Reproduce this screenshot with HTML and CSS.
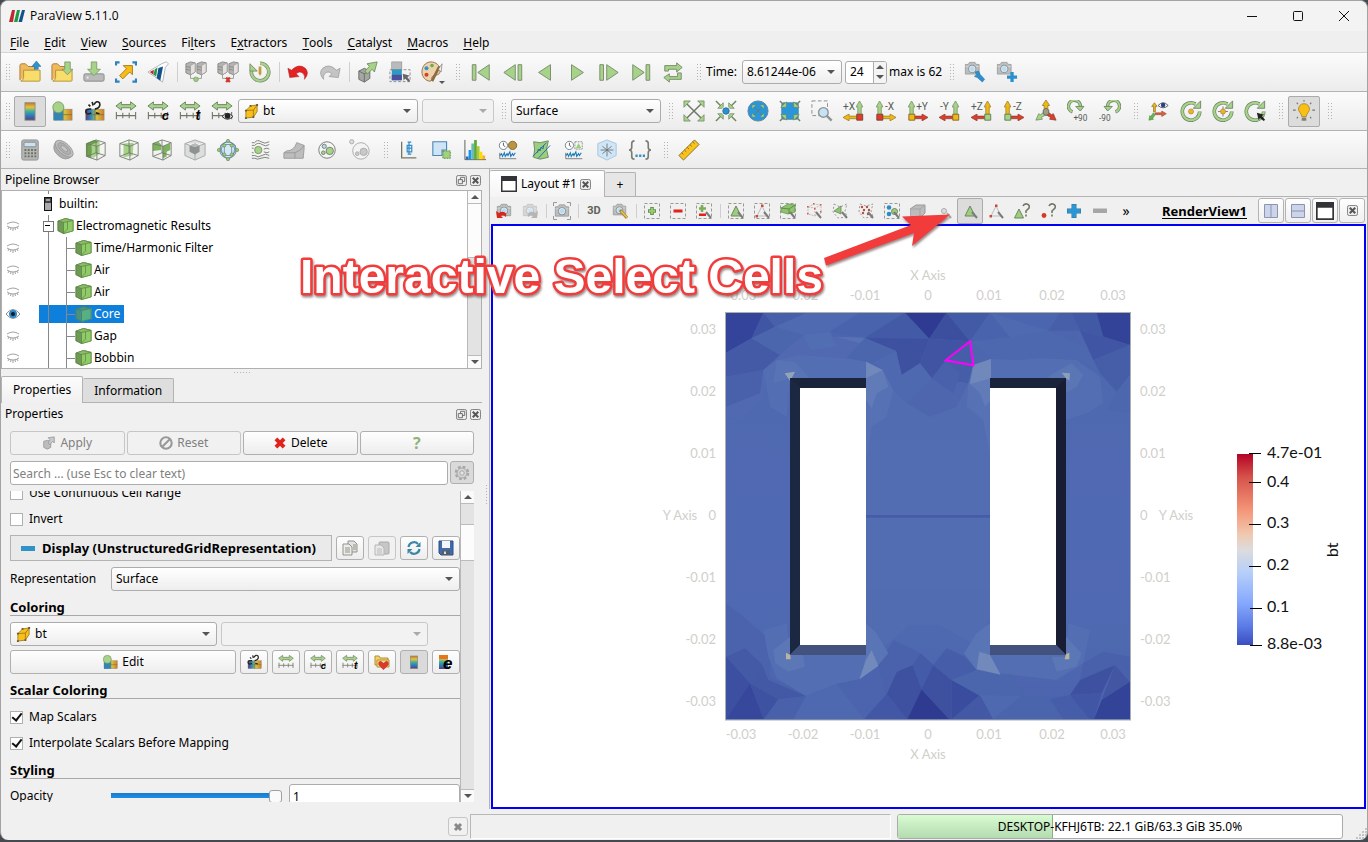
FILE: index.html
```html
<!DOCTYPE html>
<html lang="en">
<head>
<meta charset="utf-8">
<title>ParaView 5.11.0</title>
<link rel="stylesheet" href="styles.css">
</head>
<body>
<svg class="sprite" aria-hidden="true">
<defs>
<linearGradient id="rainbow" x1="0" y1="0" x2="0" y2="1"><stop offset="0" stop-color="#c4732c"/><stop offset=".25" stop-color="#e6c23c"/><stop offset=".5" stop-color="#3fae9a"/><stop offset=".72" stop-color="#2a7fc0"/><stop offset="1" stop-color="#5c3a7c"/></linearGradient>
<linearGradient id="rainbowh" x1="0" y1="0" x2="1" y2="0"><stop offset="0" stop-color="#5c3a7c"/><stop offset=".3" stop-color="#2a8fc0"/><stop offset=".6" stop-color="#d8c23c"/><stop offset="1" stop-color="#d07a2c"/></linearGradient>
<linearGradient id="cool" x1="0" y1="0" x2="0" y2="1"><stop offset="0" stop-color="#b40426"/><stop offset=".12" stop-color="#d6524a"/><stop offset=".3" stop-color="#f4987a"/><stop offset=".42" stop-color="#f0c8b0"/><stop offset=".5" stop-color="#dddcdc"/><stop offset=".62" stop-color="#b6cffa"/><stop offset=".78" stop-color="#86a8fc"/><stop offset=".9" stop-color="#5c7ce6"/><stop offset="1" stop-color="#3b4cc0"/></linearGradient>
<linearGradient id="core" x1="0" y1="0" x2="0" y2="1"><stop offset="0" stop-color="#4b64ad"/><stop offset=".2" stop-color="#4f69b0"/><stop offset=".5" stop-color="#5069b3"/><stop offset=".8" stop-color="#4f69b1"/><stop offset="1" stop-color="#4a62ac"/></linearGradient>
<clipPath id="steel"><path d="M726 313H1130V719H726Z"/></clipPath>

<symbol id="logo" viewBox="0 0 16 12"><path d="M3 0h3L4 12H0z" fill="#c1272d"/><path d="M8 0h3L8.500 12H5z" fill="#1f9a48"/><path d="M13 0h3l-3 12H9.500z" fill="#14508c"/></symbol>
<symbol id="folder" viewBox="0 0 24 24"><path d="M1 21V5q0-2 2-2h4l3 3h7v4" fill="#f0b95c" stroke="#a57d3a"/><path d="M5 10h18v11q0 1-1 1H2q3-1 3-4z" fill="#f8dc6c" stroke="#b09038"/></symbol>
<symbol id="open" viewBox="0 0 24 24"><use href="#folder"/><path d="M17 9V6h-3l5-6 5 6h-3v3z" fill="#2a93d5" stroke="#356c93" stroke-width=".6"/></symbol>
<symbol id="load" viewBox="0 0 24 24"><use href="#folder"/><path d="M15 1h6v8h3l-6 6-6-6h3z" fill="#a6d388" stroke="#6f8f5c" stroke-width=".8"/></symbol>
<symbol id="save" viewBox="0 0 24 24"><rect x="1" y="14" width="22" height="8" rx="1.500" fill="#b9bbbb" stroke="#868888"/><circle cx="5" cy="18" r="1.200" fill="#eee"/><path d="M9 1h6v8h4l-7 7-7-7h4z" fill="#a6d388" stroke="#6f8f5c" stroke-width=".8"/></symbol>
<symbol id="extract" viewBox="0 0 24 24"><path d="M1 5V1.500h4M19 1.500h4V5M23 19v3.500h-4M5 22.500H1V19" fill="none" stroke="#2a84bb" stroke-width="2.600"/><path d="M9 5h10v10l-3-3-7.500 7.500-3.500-3.500L12.500 8.500z" fill="#f8bd14" stroke="#a07a1e"/></symbol>
<symbol id="catalyst" viewBox="0 0 24 24"><path d="M1 12L16 3l5-2 2.500 2-3.500 4-3 16z" fill="#fff" stroke="#9aa2aa" stroke-width=".8"/><path d="M3 12l4.500-2.500L7 15z" fill="#c1272d"/><path d="M8.500 9l3-2-1.500 10-3-2z" fill="#1f9a48"/><path d="M12.500 7.500l5-1.500-3 15.500-4-3z" fill="#14508c"/></symbol>
<symbol id="servers" viewBox="0 0 24 24"><path d="M1 3l5-2 5 1v10l-5 3-5-2zM13 3l5-2 5 1v10l-5 3-5-2z" fill="#b3b3b1" stroke="#8a8b87"/><path d="M6 5v10l5-3V2zM18 5v10l5-3V2z" fill="#e6e0de" stroke="#8a8b87" stroke-width=".6"/><path d="M1 6l5 1M1 9l5 1M13 6l5 1M13 9l5 1" stroke="#888"/><path d="M6 15v4h12v-4" fill="none" stroke="#999"/></symbol>
<symbol id="connect" viewBox="0 0 24 24"><use href="#servers"/><circle cx="12" cy="20" r="2.600" fill="#9ccc7e" stroke="#6f8f5c" stroke-width=".6"/></symbol>
<symbol id="disconnect" viewBox="0 0 24 24"><use href="#servers"/><path d="M10 18l4 5M14 18l-4 5" stroke="#cf3528" stroke-width="2.400"/></symbol>
<symbol id="reset" viewBox="0 0 24 24"><path d="M4 7a9.500 9.500 0 1 0 8-4.500" fill="none" stroke="#7a8b70" stroke-width="4"/><path d="M4 7a9.500 9.500 0 1 0 8-4.500" fill="none" stroke="#a6d388" stroke-width="2.400"/><path d="M1 3v8h8z" fill="#a6d388" stroke="#7a8b70"/><path d="M10.500 6h3v8l-1.500 2-1.500-2z" fill="#c49a3a"/></symbol>
<symbol id="undo" viewBox="0 0 24 24"><path d="M1 8l2 10 10-1-3-3q4-4 8 0 2 3 1 6 6-7 1-12-7-6-15 2z" fill="#e32222" stroke="#b01b1b" stroke-width=".6"/></symbol>
<symbol id="redo" viewBox="0 0 24 24"><path d="M23 8l-2 10-10-1 3-3q-4-4-8 0-2 3-1 6-6-7-1-12 7-6 15 2z" fill="#c4c4c4" stroke="#979797" stroke-width=".8"/></symbol>
<symbol id="box" viewBox="0 0 24 24"><path d="M2 11l6-3 6 3v8l-6 4-6-3z" fill="#a5a7a3" stroke="#666b62"/><path d="M2 11l6 3 6-3M8 14v9" fill="none" stroke="#666b62"/></symbol>
<symbol id="autoapply" viewBox="0 0 24 24"><use href="#box"/><path d="M11 3l11-2-3 11-2.500-3-5 5-3-3 5-5z" fill="#a6d388" stroke="#6d8560" stroke-width=".9"/></symbol>
<symbol id="cropbar" viewBox="0 0 24 24"><rect x="3" y="1" width="11" height="9" fill="#b8babc" stroke="#888" stroke-width=".6"/><rect x="3" y="9" width="11" height="12" fill="#2a9cc4"/><rect x="3" y="15" width="11" height="6" fill="#4b4f9c"/><rect x="1" y="9.500" width="22" height="13" fill="none" stroke="#888" stroke-dasharray="3 2"/><path d="M15 14l8 2-3 1.500 3 4-1.500 1.500-4-4-1.500 2.500z" fill="#666"/></symbol>
<symbol id="palette" viewBox="0 0 24 24"><path d="M11 1C4 1 1 7 1 12s4 10 9 10c3 0 0-5 4-6s7-1 7-6S16 1 11 1z" fill="#eed2ac" stroke="#8f6c48"/><circle cx="12" cy="5" r="2" fill="#6fae4a"/><circle cx="6" cy="8" r="2.200" fill="#2f94cf"/><circle cx="6" cy="15" r="2.200" fill="#d44030"/><path d="M20 6l-8 16" stroke="#8b6b40" stroke-width="3"/><path d="M19 9l4-6-1 9z" fill="#f2efe6" stroke="#777" stroke-width=".7"/></symbol>
<symbol id="first" viewBox="0 0 24 24"><g fill="#a6d388" stroke="#76896b"><path d="M2.500 4h4v17h-4zM21 4v17L8.500 12.500z"/></g></symbol>
<symbol id="prev" viewBox="0 0 24 24"><g fill="#a6d388" stroke="#76896b"><path d="M17.500 4h4v17h-4zM14.500 4v17L2 12.500z"/></g></symbol>
<symbol id="back" viewBox="0 0 24 24"><path d="M18 4v17L5 12.500z" fill="#a6d388" stroke="#76896b"/></symbol>
<symbol id="play" viewBox="0 0 24 24"><path d="M6 4v17l13-8.500z" fill="#a6d388" stroke="#76896b"/></symbol>
<symbol id="next" viewBox="0 0 24 24"><g fill="#a6d388" stroke="#76896b"><path d="M2 4h4v17H2zM9.500 4v17L22 12.500z"/></g></symbol>
<symbol id="last" viewBox="0 0 24 24"><g fill="#a6d388" stroke="#76896b"><path d="M17.500 4h4v17h-4zM3 4v17l12.500-8.500z"/></g></symbol>
<symbol id="loop" viewBox="0 0 24 24"><path d="M3 11V5h13V2l6 5-6 5V9H7v2zM21 13v7H8v3l-6-5 6-4v3h9v-4z" fill="#a6d388" stroke="#76896b"/></symbol>
<symbol id="cam" viewBox="0 0 24 24"><path d="M2 5h4l2-3h8l2 3h4v14H2z" fill="#bcbebf" stroke="#8a8c8c"/><path d="M2 8h20" stroke="#d9d9d9"/><circle cx="12" cy="11.500" r="6" fill="#8e9294"/><circle cx="12" cy="11.500" r="4.200" fill="#b9dcf2" stroke="#eaf5fb"/></symbol>
<symbol id="camwrench" viewBox="0 0 24 24"><use href="#cam" x="0" y="0" width="18" height="18"/><path d="M12 12l4-1 1.500 3.500 5 5.500-2.500 3-5.500-5-3-1 1-1.500 2 .5z" fill="#2a90d0" stroke="#2d6f9c" stroke-width=".6"/></symbol>
<symbol id="camplus" viewBox="0 0 24 24"><use href="#cam" x="0" y="0" width="18" height="18"/><path d="M17.500 12v11M12 17.500h11" stroke="#2a90d0" stroke-width="3.600"/></symbol>
<symbol id="cbar" viewBox="0 0 24 24"><rect x="6.500" y="3" width="11" height="19" fill="url(#rainbow)" stroke="#8b8b80"/></symbol>
<symbol id="hbar" viewBox="0 0 24 24"><rect x="3" y="10" width="20" height="12" fill="url(#rainbowh)" stroke="#8b8b80" stroke-width=".6"/><path d="M13 10v12M3 16h20" stroke="#6b6b50" stroke-width=".8"/></symbol>
<symbol id="editmap" viewBox="0 0 24 24"><use href="#hbar"/><path d="M3 12h10v10H3z" fill="#3286b4"/><circle cx="8" cy="8" r="6" fill="#a6d388" stroke="#7b9a68"/></symbol>
<symbol id="separate" viewBox="0 0 24 24"><use href="#hbar"/><path d="M9 14q-5 3-6-1 0-4 6-3M12 5q3-5 6-2 2 5-5 7M6 5l2 2M10 2l1 4M14 14l4 1" fill="none" stroke="#222" stroke-width="1.800"/></symbol>
<symbol id="rescale" viewBox="0 0 24 24"><path d="M1 6.500L7 2v3h10V2l6 4.500-6 4.500V8.500H7V11z" fill="#a6d388" stroke="#6e7e64"/><path d="M1 17h22M1.500 13v8M8.500 14v6M15.500 14v6M22.500 13v8" fill="none" stroke="#757567" stroke-width="1.200"/></symbol>
<symbol id="rescalec" viewBox="0 0 24 24"><use href="#rescale"/><text x="16" y="22" font-size="14" font-family="Liberation Sans,sans-serif" font-style="italic" font-weight="700">c</text></symbol>
<symbol id="rescalet" viewBox="0 0 24 24"><use href="#rescale"/><text x="18" y="22" font-size="15" font-family="Liberation Sans,sans-serif" font-style="italic" font-weight="700">t</text></symbol>
<symbol id="rescalev" viewBox="0 0 24 24"><use href="#rescale"/><path d="M12 18q6-7 12 0-6 6-12 0z" fill="#ddd" stroke="#222"/><circle cx="18" cy="17.500" r="3" fill="#222"/></symbol>
<symbol id="cell" viewBox="0 0 16 16"><path d="M2 7l5-5 7-1v7l-4 6-8 1z" fill="#f9c01c" stroke="#8f6c14" stroke-width=".8"/><path d="M2 7l8-.5L14 1M10 6.500V14" fill="none" stroke="#8f6c14" stroke-width=".8"/><path d="M1 6h2v2H1zM13 0h2v2h-2zM9 13h2v2H9zM1 14h2v2H1zM6 1h2v2H6z" fill="#6c5a30"/></symbol>
<symbol id="out4" viewBox="0 0 24 24"><path d="M4 4l16 16M20 4L4 20" stroke="#6f7868" stroke-width="1.600"/><path d="M1 1h7L1 8zM23 1v7l-7-7zM1 23v-7l7 7zM23 23h-7l7-7z" fill="#a6d388" stroke="#6f8560" stroke-width=".8"/></symbol>
<symbol id="in4" viewBox="0 0 24 24"><path d="M1 1l22 22M23 1L1 23" stroke="#6f8560" stroke-width="1.600"/><path d="M9 9V3L3 9zM15 9h6l-6-6zM9 15H3l6 6zM15 15v6l6-6z" fill="#a6d388" stroke="#6f8560" stroke-width=".8"/></symbol>
<symbol id="zdata" viewBox="0 0 24 24"><use href="#in4"/><circle cx="12" cy="12" r="5" fill="#f5f5f5"/><circle cx="12" cy="12" r="3.500" fill="#2a90d0" stroke="#2d6f9c"/></symbol>
<symbol id="rclose" viewBox="0 0 24 24"><circle cx="12" cy="12" r="11" fill="#2896d8" stroke="#68808c"/><use href="#out4" x="5" y="5" width="14" height="14"/></symbol>
<symbol id="zclose" viewBox="0 0 24 24"><rect x="3" y="3" width="18" height="18" fill="#2896d8" stroke="#4f88a8" rx="2"/><path d="M1 1l6 6M23 1l-6 6M1 23l6-6M23 23l-6-6" stroke="#6f8560" stroke-width="1.600"/><path d="M8 8V2L2 8zM16 8h6l-6-6zM8 16H2l6 6zM16 16v6l6-6z" fill="#a6d388" stroke="#6f8560" stroke-width=".8"/></symbol>
<symbol id="lens" viewBox="0 0 24 24"><path d="M14 14l8 8" stroke="#8f9494" stroke-width="3.500"/><circle cx="10" cy="10" r="7" fill="#c6e2f5" stroke="#8f9696" stroke-width="2"/></symbol>
<symbol id="zbox" viewBox="0 0 24 24"><rect x="1" y="1" width="17" height="16" fill="none" stroke="#888" stroke-dasharray="4 2.500"/><use href="#lens" x="6" y="6" width="18" height="18"/></symbol>
<symbol id="up" viewBox="0 0 8 18"><path d="M4 0l4 7H6v11H2V7H0z"/></symbol>
<symbol id="side" viewBox="0 0 18 8"><path d="M18 4l-7 4V5.500H0v-3h11V0z"/></symbol>
<symbol id="sidel" viewBox="0 0 18 8"><path d="M0 4l7 4V5.500h11v-3H7V0z"/></symbol>
<symbol id="px" viewBox="0 0 24 24"><use href="#up" x="14" y="1" width="8" height="17" fill="#a6d388" stroke="#6f8560" stroke-width=".8"/><use href="#sidel" x="0" y="15" width="17" height="8" fill="#f0b814" stroke="#93752a" stroke-width=".8"/><path d="M15 15.500h6.500V22H15z" fill="#e23b2a" stroke="#7a4030"/><text x="0" y="11" font-size="11" fill="#565b56" font-family="Roboto,sans-serif">+X</text></symbol>
<symbol id="mx" viewBox="0 0 24 24"><use href="#up" x="1" y="1" width="8" height="17" fill="#a6d388" stroke="#6f8560" stroke-width=".8"/><use href="#side" x="6" y="15" width="17" height="8" fill="#f0b814" stroke="#93752a" stroke-width=".8"/><path d="M2 15.500h6.500V22H2z" fill="#e23b2a" stroke="#7a4030"/><text x="11" y="11" font-size="11" fill="#565b56" font-family="Roboto,sans-serif">-X</text></symbol>
<symbol id="py" viewBox="0 0 24 24"><use href="#up" x="1" y="1" width="8" height="17" fill="#a6d388" stroke="#6f8560" stroke-width=".8"/><use href="#side" x="6" y="15" width="17" height="8" fill="#dc3d2d" stroke="#8a4030" stroke-width=".8"/><path d="M2 15.500h6.500V22H2z" fill="#f0b814" stroke="#83652a"/><text x="10" y="11" font-size="11" fill="#565b56" font-family="Roboto,sans-serif">+Y</text></symbol>
<symbol id="my" viewBox="0 0 24 24"><use href="#up" x="14" y="1" width="8" height="17" fill="#a6d388" stroke="#6f8560" stroke-width=".8"/><use href="#sidel" x="0" y="15" width="17" height="8" fill="#dc3d2d" stroke="#8a4030" stroke-width=".8"/><path d="M15 15.500h6.500V22H15z" fill="#f0b814" stroke="#83652a"/><text x="1" y="11" font-size="11" fill="#565b56" font-family="Roboto,sans-serif">-Y</text></symbol>
<symbol id="pz" viewBox="0 0 24 24"><use href="#up" x="14" y="1" width="8" height="17" fill="#f0b814" stroke="#93752a" stroke-width=".8"/><use href="#sidel" x="0" y="15" width="17" height="8" fill="#dc3d2d" stroke="#8a4030" stroke-width=".8"/><path d="M15 15.500h6.500V22H15z" fill="#a6d388" stroke="#5f7a50"/><text x="0" y="11" font-size="11" fill="#565b56" font-family="Roboto,sans-serif">+Z</text></symbol>
<symbol id="mz" viewBox="0 0 24 24"><use href="#up" x="1" y="1" width="8" height="17" fill="#f0b814" stroke="#93752a" stroke-width=".8"/><use href="#side" x="6" y="15" width="17" height="8" fill="#dc3d2d" stroke="#8a4030" stroke-width=".8"/><path d="M2 15.500h6.500V22H2z" fill="#a6d388" stroke="#5f7a50"/><text x="11" y="11" font-size="11" fill="#565b56" font-family="Roboto,sans-serif">-Z</text></symbol>
<symbol id="iso" viewBox="0 0 24 24"><path d="M12 0l4 6h-2v7h-4V6H8z" fill="#f0b814" stroke="#93752a" stroke-width=".8"/><path d="M10 13l2 3-5 3 1 2-7 1 3-7 2 1z" fill="#a6d388" stroke="#6f8560" stroke-width=".8"/><path d="M14 13l-2 3 5 3-1 2 7 1-3-7-2 1z" fill="#dc3d2d" stroke="#8a4030" stroke-width=".8"/><path d="M9 11l3-2 3 2v4l-3 2-3-2z" fill="#9aa07a" stroke="#666"/></symbol>
<symbol id="rotp" viewBox="0 0 24 24"><path d="M6 13A6.500 6.500 0 1 1 14.500 8" fill="none" stroke="#70836a" stroke-width="3.800"/><path d="M6 13A6.500 6.500 0 1 1 14.500 8" fill="none" stroke="#a6d388" stroke-width="2"/><path d="M9.500 7h9l-4 5z" fill="#a6d388" stroke="#70836a"/><text x="7" y="23" font-size="9" fill="#565b56" font-family="Roboto,sans-serif">+90</text></symbol>
<symbol id="rotm" viewBox="0 0 24 24"><path d="M18 13A6.500 6.500 0 1 0 9.500 8" fill="none" stroke="#70836a" stroke-width="3.800"/><path d="M18 13A6.500 6.500 0 1 0 9.500 8" fill="none" stroke="#a6d388" stroke-width="2"/><path d="M14.500 7h-9l4 5z" fill="#a6d388" stroke="#70836a"/><text x="0" y="23" font-size="9" fill="#565b56" font-family="Roboto,sans-serif">-90</text></symbol>
<symbol id="axes" viewBox="0 0 24 24"><path d="M6 13V7H4l3-4 3 4H8v6z" fill="#f0b814" stroke="#93752a" stroke-width=".8"/><path d="M8 14h7v-2l5 3-5 3v-2H8z" fill="#e2603a" stroke="#8a4030" stroke-width=".6"/><path d="M6 14l2 2-3 4 1 1-5 1 1-5 1 1z" fill="#62b84a" stroke="#4f7a40" stroke-width=".6"/><path d="M11 6q5.500-6 11 0-5.500 5-11 0z" fill="#fff" stroke="#555"/><circle cx="16.500" cy="5.500" r="2.500" fill="#26408c"/></symbol>
<symbol id="ring" viewBox="0 0 24 24"><path d="M21.500 12.500A9.500 9.500 0 1 1 17 4.500" fill="none" stroke="#70836a" stroke-width="4"/><path d="M21.500 12.500A9.500 9.500 0 1 1 17 4.500" fill="none" stroke="#a6d388" stroke-width="2.400"/><path d="M22.500 1v8h-8z" fill="#a6d388" stroke="#70836a"/></symbol>
<symbol id="center1" viewBox="0 0 24 24"><use href="#ring"/><circle cx="12" cy="12.500" r="2.800" fill="#f0b02a" stroke="#a07a2a" stroke-width=".6"/></symbol>
<symbol id="center2" viewBox="0 0 24 24"><use href="#ring"/><path d="M12 7v11M6.500 12.500h11" stroke="#777"/><circle cx="12" cy="12.500" r="2.800" fill="#f0b02a" stroke="#a07a2a" stroke-width=".6"/></symbol>
<symbol id="center3" viewBox="0 0 24 24"><use href="#ring"/><path d="M14 14l8 2-2.500 1.500 3.500 4-1.500 1.500-4-3.500-1.500 2.500z" fill="#222"/></symbol>
<symbol id="bulb" viewBox="0 0 24 24"><path d="M12 4c-4 0-6 3-6 6s3 4 3.500 8h5c.5-4 3.500-5 3.500-8s-2-6-6-6z" fill="#f9bf14" stroke="#a07c22" stroke-width=".8"/><path d="M9.500 19h5v3.500h-5z" fill="#85816f"/><path d="M12 0v2M4 3l1.500 1.500M20 3l-1.500 1.500M0 11h3M21 11h3M4 20l1.500-1.500M20 20l-1.500-1.500" stroke="#777" stroke-width="1.200"/></symbol>
<symbol id="calc" viewBox="0 0 24 24"><rect x="3" y="1" width="18" height="22" rx="2" fill="#b4b5b5" stroke="#8d8f8f"/><rect x="5.500" y="3.500" width="13" height="5" rx="1" fill="#c8e2f6" stroke="#888"/><path d="M6 12h13M6 15.500h13M6 19h13" stroke="#6a705f" stroke-width="2" stroke-dasharray="2 1.600"/></symbol>
<symbol id="contour" viewBox="0 0 24 24"><g transform="rotate(42 12 12)" stroke="#969696" stroke-width=".8"><path d="M0 10q12-8 24 0-1 10-12 10T0 10z" fill="#adadad"/><ellipse cx="12" cy="10" rx="12" ry="6" fill="#bebebe"/><ellipse cx="12" cy="10" rx="8.500" ry="4" fill="#b0b0b0"/><ellipse cx="12" cy="10" rx="4.500" ry="2" fill="#c6c6c6"/></g></symbol>
<symbol id="wire" viewBox="0 0 24 24"><path d="M2 5l10-4 10 3v14l-9 5-11-4zM2 5l11 3 9-4M13 8v15M12 1v14M2 19l10-4 10 3" fill="none" stroke="#6e7468" stroke-width=".9"/></symbol>
<symbol id="clip" viewBox="0 0 24 24"><path d="M1 5l9-4 6 2-8 4-1 14-6-2z" fill="#6ba14b"/><path d="M7 6l9-3v13l-8 5z" fill="#a6d388"/><use href="#wire"/></symbol>
<symbol id="slice" viewBox="0 0 24 24"><path d="M6 5l11-1-1 14-10 2z" fill="#a6d388"/><use href="#wire"/></symbol>
<symbol id="thresh" viewBox="0 0 24 24"><path d="M2 5l6-2 3 3v6l-9 1zM13 8l8-3v7l-4 2v5l-4 2z" fill="#7db35c"/><use href="#wire"/></symbol>
<symbol id="subset" viewBox="0 0 24 24"><path d="M1 5l11-4 11 4v13l-11 5L1 18zM1 5l11 4 11-4M12 9v14" fill="#dcdddd" stroke="#a4a6a6"/><path d="M6 7l6-2 5 2v7l-5 3-6-3z" fill="#8f9292"/><path d="M6 7l6-2 5 2-5 2z" fill="#bbb"/></symbol>
<symbol id="glyph" viewBox="0 0 24 24"><circle cx="12" cy="12" r="9" fill="#d4e8f8" stroke="#647f96"/><path d="M12 2l8 5-2 10-6 5-6-5L4 7zM3 12l5-6h8l5 6-5 6H8zM8 6v12M16 6v12" fill="none" stroke="#5c7c91" stroke-width=".8"/><g fill="#9ccf7d" stroke="#5f8650" stroke-width=".7"><circle cx="12" cy="2" r="1.700"/><circle cx="2" cy="12" r="1.700"/><circle cx="22" cy="12" r="1.700"/><circle cx="12" cy="22" r="1.700"/><circle cx="8" cy="7" r="1.700"/><circle cx="16" cy="7" r="1.700"/><circle cx="8" cy="17" r="1.700"/><circle cx="16" cy="17" r="1.700"/></g></symbol>
<symbol id="stream" viewBox="0 0 24 24"><path d="M2 4h3q3-4 7-1t9 0M2 7h3q4-4 8-1t8 0M2 21h3q3 2 7 0t9 0M2 18h3q4 3 8 0t8 0M15 11q4-2 6 0M15 14q4 2 6 0M2 10h2M2 15h2" fill="none" stroke="#777d74"/><circle cx="9" cy="12" r="4" fill="#a6d388" stroke="#6f8560" stroke-width=".8"/></symbol>
<symbol id="warp" viewBox="0 0 24 24"><path d="M1 15l3-2q8 0 11-9l8 3v4l-1 10H1z" fill="#bdbdbd" stroke="#999"/><path d="M1 15h12q7-2 10-8M13 15v6" fill="none" stroke="#999"/></symbol>
<symbol id="group" viewBox="0 0 24 24"><circle cx="12" cy="12" r="9" fill="#f2f7f0" stroke="#777"/><circle cx="9" cy="8" r="2.300" fill="#b7d9f2" stroke="#777"/><circle cx="8" cy="15" r="2" fill="#a6d388" stroke="#777"/><circle cx="15" cy="13" r="4" fill="#a6d388" stroke="#777"/></symbol>
<symbol id="ungroup" viewBox="0 0 24 24"><circle cx="13" cy="13" r="9" fill="#f3f3f3" stroke="#aaa"/><circle cx="3" cy="3" r="2.300" fill="#ddd" stroke="#aaa"/><circle cx="9" cy="16" r="2" fill="#ccc" stroke="#aaa"/><circle cx="16" cy="14" r="4" fill="#c8c8c8" stroke="#aaa"/></symbol>
<symbol id="boxplot" viewBox="0 0 24 24"><path d="M4 3v17.500h16" fill="none" stroke="#747667" stroke-width="1.400"/><path d="M12 3v14M10 7h5v7h-5zM10 10h5M10.500 3.500h4M10.500 16.500h4" fill="none" stroke="#2f8cc8" stroke-width="1.300"/></symbol>
<symbol id="plotsel" viewBox="0 0 24 24"><path d="M2 3h15v9h-5v6H2z" fill="#cfe5f7" stroke="#4a87b5" stroke-width="1.200"/><rect x="13" y="13" width="8" height="8" fill="#9ed27c" stroke="#58803f" stroke-dasharray="2 1"/></symbol>
<symbol id="histo" viewBox="0 0 24 24"><path d="M1 1v21.500h23" fill="none" stroke="#555"/><path d="M2 19h3v3H2z" fill="#2b6cb4"/><path d="M5 12h3v10H5z" fill="#1594ff"/><path d="M8 5h3v17H8z" fill="#6fb9ae"/><path d="M11 1h3v21h-3z" fill="#5cab39"/><path d="M14 8h3v14h-3z" fill="#a9cb34"/><path d="M17 14h3v8h-3z" fill="#ffdb00"/><path d="M20 18h3v4h-3z" fill="#ffab28"/></symbol>
<symbol id="wave" viewBox="0 0 24 24"><path d="M3 15v6.500h18" fill="none" stroke="#777"/><path d="M3 18l2-2 1 3 2-4 1 4 2-3 1 2 2-4 1 5 2-3 1 2 2-3" fill="none" stroke="#1c7ab8" stroke-width="1.200"/></symbol>
<symbol id="plottime" viewBox="0 0 24 24"><use href="#wave"/><circle cx="7" cy="7" r="4.500" fill="#fff" stroke="#6d7f8c"/><path d="M7 4v3l2 1.500" fill="none" stroke="#555"/><circle cx="17" cy="7" r="4.500" fill="#bd9440" stroke="#7d683a"/></symbol>
<symbol id="plotline" viewBox="0 0 24 24"><path d="M4 3l7 1 9-2-2 9 2 9-9 2-7-2 1-9z" fill="#9ccf7d" stroke="#6f8560"/><path d="M3 19L18 4M9 21L22 7M8 15l1-4 2 2 1-4 2 2 1-4" fill="none" stroke="#1c6aa8"/></symbol>
<symbol id="plotsel2" viewBox="0 0 24 24"><use href="#wave"/><circle cx="7" cy="7" r="4.500" fill="#fff" stroke="#6d7f8c"/><path d="M7 4v3l2 1.500" fill="none" stroke="#555"/><rect x="13" y="3" width="8" height="8" fill="none" stroke="#888" stroke-dasharray="2 1"/><path d="M17 4l3 6h-6z" fill="#9ccf7d"/></symbol>
<symbol id="probe" viewBox="0 0 24 24"><path d="M12 1l10 4v13l-10 5-10-5V5z" fill="#d0e5f5" stroke="#a5c3da"/><path d="M12 5v14M5 12h14M7 8l10 8M17 8L7 16" stroke="#6f767b"/></symbol>
<symbol id="braces" viewBox="0 0 24 24"><path d="M6 2q-3 0-3 3v4q0 3-3 3 3 0 3 3v4q0 3 3 3M18 2q3 0 3 3v4q0 3 3 3-3 0-3 3v4q0 3-3 3" fill="none" stroke="#7c7c74" stroke-width="1.800"/><path d="M7 17h2.500v2.500H7zM11 17h2.500v2.500H11zM15 17h2.500v2.500H15z" fill="#3c8fc0"/></symbol>
<symbol id="ruler" viewBox="0 0 24 24"><path d="M18 1l5 5L6 23l-5-5z" fill="#fbc21a" stroke="#7f6b2f"/><path d="M4 15l2 2M7 12l2 2M10 9l2 2M13 6l2 2M16 3l2 2" stroke="#7f6b2f"/></symbol>
<symbol id="float" viewBox="0 0 12 12"><rect x=".5" y=".5" width="11" height="11" rx="2" fill="#eee" stroke="#777"/><path d="M5 5V2.500h4.500V7H7M2.500 5H7v4.500H2.500z" fill="none" stroke="#666"/></symbol>
<symbol id="close" viewBox="0 0 12 12"><rect x=".5" y=".5" width="11" height="11" rx="2" fill="#eee" stroke="#777"/><path d="M3 3l6 6M9 3L3 9" stroke="#555" stroke-width="2.200"/></symbol>
<symbol id="eyeoff" viewBox="0 0 14 10"><path d="M1 3q6-4 12 0M1 5q6 4 12 0M3 6L2 8M7 7v3M11 6l1 2M5 7l-.5 2M9 7l.5 2" fill="none" stroke="#a3a3a3"/></symbol>
<symbol id="eyeon" viewBox="0 0 14 10"><path d="M0 5q7-9 14 0-7 9-14 0z" fill="#fff" stroke="#8c8c8c"/><circle cx="7" cy="5" r="4" fill="#2a87c6"/><circle cx="7" cy="5" r="2" fill="#0a1b2c"/></symbol>
<symbol id="cube" viewBox="0 0 16 16"><path d="M0 3l8-3 8 2v11l-10 3-6-3z" fill="#6f9a55"/><path d="M0 3l8-3 8 2-10 2z" fill="#8bbd69"/><path d="M6 4l10-2v11L6 16z" fill="#8fcc67"/><path d="M.5 3L8 .5l7.500 2v10.500L6 15.500l-5.500-3zM.5 3L6 4.500l9.500-2M6 4.500v11M10 4v7l-4 4" fill="none" stroke="#5c8045" stroke-width=".7"/></symbol>
<symbol id="cubesel" viewBox="0 0 16 16"><path d="M0 3l8-3 8 2v11l-10 3-6-3z" fill="#4a9180"/><path d="M6 4l10-2v11L6 16z" fill="#58b082"/><path d="M.5 3L8 .5l7.500 2v10.500L6 15.500l-5.500-3zM.5 3L6 4.500l9.500-2M6 4.500v11" fill="none" stroke="#3c7b79" stroke-width=".7"/></symbol>
<symbol id="host" viewBox="0 0 8 14"><rect x=".5" y=".5" width="7" height="13" fill="#aaa" stroke="#111"/><path d="M1 1h6v5H1z" fill="#444"/><path d="M2 3h4" stroke="#fff"/></symbol>
<symbol id="win" viewBox="0 0 16 16"><path d="M0 0h16v16H0z" fill="#323437"/><path d="M1.500 5h13v9.500h-13z" fill="#fff"/></symbol>
<symbol id="dash" viewBox="0 0 16 16"><rect x=".5" y=".5" width="15" height="15" fill="none" stroke="#9a9a92" stroke-dasharray="3 2"/></symbol>
<symbol id="wand" viewBox="0 0 16 16"><path d="M10 9l5 6" stroke="#7b7b7b" stroke-width="2"/></symbol>
<symbol id="camundo" viewBox="0 0 16 16"><use href="#cam" width="16" height="16"/><path d="M0 8l1 7h6l-2-2q2-2 5 1 1-4-2-5-3-1-5 1z" fill="#d8261d"/></symbol>
<symbol id="camredo" viewBox="0 0 16 16"><use href="#cam" width="16" height="16" opacity=".5"/><path d="M16 8l-1 7H9l2-2q-2-2-5 1-1-4 2-5 3-1 5 1z" fill="#b5b5b5"/></symbol>
<symbol id="capture" viewBox="0 0 18 18"><path d="M.5 4V.5H4M14 .5h3.500V4M17.500 14v3.500H14M4 17.500H.5V14" fill="none" stroke="#999"/><use href="#cam" x="1" y="1" width="16" height="17"/></symbol>
<symbol id="camedit" viewBox="0 0 16 16"><use href="#cam" width="15" height="15"/><path d="M8 7l7 8" stroke="#a28332" stroke-width="3"/><path d="M9 8l6 6.500" stroke="#edc84a" stroke-width="1.400"/></symbol>
<symbol id="sadd" viewBox="0 0 16 16"><use href="#dash"/><path d="M8 4v8M4 8h8" stroke="#66904d" stroke-width="3.600"/><path d="M8 5v6M5 8h6" stroke="#94cc70" stroke-width="2"/></symbol>
<symbol id="ssub" viewBox="0 0 16 16"><use href="#dash"/><path d="M3.500 6.500h9v3h-9z" fill="#e2231a"/></symbol>
<symbol id="stog" viewBox="0 0 16 16"><use href="#dash"/><path d="M6 2v7M3 5.500h7" stroke="#7aae5b" stroke-width="2.600"/><path d="M3 10.500h7v2.500H3z" fill="#e2231a"/><use href="#wand"/></symbol>
<symbol id="tri" viewBox="0 0 16 16"><path d="M8 3l5 10H3z" fill="#9ccf7d" stroke="#6f8560"/></symbol>
<symbol id="scell" viewBox="0 0 16 16"><use href="#dash"/><use href="#tri"/><use href="#wand"/></symbol>
<symbol id="pts" viewBox="0 0 16 16"><path d="M8 3L3 13h10z" fill="none" stroke="#bbb"/><path d="M7 1.500h2.500V4H7zM1.500 12H4v2.500H1.500z" fill="#c84a36"/><use href="#wand"/></symbol>
<symbol id="spts" viewBox="0 0 16 16"><use href="#dash"/><use href="#pts"/></symbol>
<symbol id="sfrus" viewBox="0 0 16 16"><use href="#dash"/><path d="M1 5l7-4 7 1v7l-7 2-7-2z" fill="#8fc46e" stroke="#6a9452" stroke-width=".8"/><path d="M1 5l8 1 6-4M9 6v5" fill="none" stroke="#557f3e" stroke-width=".8"/><use href="#wand"/></symbol>
<symbol id="sfrp" viewBox="0 0 16 16"><path d="M2 4l6-3 7 1v8l-6 3-7-2zM2 4l7 1 6-3M9 5v8" fill="none" stroke="#c8b9b4" stroke-dasharray="2 1"/><g fill="#d85a4a"><path d="M1 3h1.500v1.500H1zM7 0h1.500v1.500H7zM14 1h1.500v1.500H14zM8 5h1.500v1.500H8zM1 10h1.500v1.500H1zM14 8h1.500v1.500H14z"/></g><use href="#wand"/></symbol>
<symbol id="spoly" viewBox="0 0 16 16"><path d="M2 1l6 3 7-3-2 7 2 6-9 1-5-6z" fill="none" stroke="#999" stroke-dasharray="2 2"/><path d="M9 3v8L2 8z" fill="#8cc46c" stroke="#6f8560" stroke-width=".8"/><use href="#wand"/></symbol>
<symbol id="spolyp" viewBox="0 0 16 16"><path d="M2 1l6 2 7-2-2 7 2 6-9 1-5-6z" fill="none" stroke="#999" stroke-dasharray="2 2"/><g fill="#b5503d"><circle cx="4" cy="4" r="1.200"/><circle cx="9" cy="4" r="1.200"/><circle cx="6" cy="7" r="1.200"/><circle cx="11" cy="7" r="1.200"/><circle cx="5" cy="10" r="1.200"/><circle cx="10" cy="11" r="1.200"/></g><use href="#wand"/></symbol>
<symbol id="sblock" viewBox="0 0 16 16"><use href="#dash"/><circle cx="5" cy="4.500" r="2.300" fill="#2a8cc8"/><circle cx="5" cy="11" r="2.300" fill="#2a8cc8"/><circle cx="10.500" cy="8.500" r="3" fill="#9ccf7d" stroke="#6f8560"/><use href="#wand"/></symbol>
<symbol id="gcube" viewBox="0 0 16 16"><path d="M0 6l6-4h9v8l-4 4H0z" fill="#bcbcbc" stroke="#999"/><path d="M0 6h10l5-4M10 6v8" fill="none" stroke="#a5a5a5"/></symbol>
<symbol id="gpt" viewBox="0 0 16 16"><circle cx="8" cy="8" r="2.500" fill="#ddd" stroke="#aaa"/><path d="M11 10l4 5" stroke="#aaa" stroke-width="2"/></symbol>
<symbol id="icell" viewBox="0 0 16 16"><use href="#tri"/><use href="#wand"/></symbol>
<symbol id="qcell" viewBox="0 0 16 16"><path d="M5 6l4.500 9H.5z" fill="#9ccf7d" stroke="#6f8560"/><path d="M9 3q1-2.500 4-2 3 1 2 4-2 2-3 3v2M12 11.500v2" fill="none" stroke="#6f7862" stroke-width="1.600"/></symbol>
<symbol id="qpt" viewBox="0 0 16 16"><circle cx="4" cy="12.500" r="2.400" fill="#d2392b"/><path d="M9 3q1-2.500 4-2 3 1 2 4-2 2-3 3v2M12 11.500v2" fill="none" stroke="#6f7862" stroke-width="1.600"/></symbol>
<symbol id="plus" viewBox="0 0 16 16"><path d="M8 1v14M1 8h14" stroke="#3a7090" stroke-width="5"/><path d="M8 1.500v13M1.500 8h13" stroke="#2a96d6" stroke-width="4"/></symbol>
<symbol id="minus" viewBox="0 0 16 16"><path d="M1 5.500h14v4.500H1z" fill="#a6a6a6"/></symbol>
<symbol id="splith" viewBox="0 0 16 16"><path d="M1.500 1.500h13v13h-13zM8 1.500v13" fill="#ccd4ec" stroke="#8d94ad"/></symbol>
<symbol id="splitv" viewBox="0 0 16 16"><path d="M1.500 1.500h13v13h-13zM1.500 8h13" fill="#ccd4ec" stroke="#8d94ad"/></symbol>
<symbol id="applyg" viewBox="0 0 16 16"><path d="M2 6l4-1 4 1v7l-4 2-4-2z" fill="#bdbdbd" stroke="#9c9c9c"/><path d="M7 2l7-1v7l-2-2-3 4-2-2 2-4z" fill="#c9c9c9" stroke="#9c9c9c"/></symbol>
<symbol id="forbid" viewBox="0 0 16 16"><circle cx="8" cy="8" r="6.500" fill="none" stroke="#999" stroke-width="2.400"/><path d="M4 12l8-8" stroke="#999" stroke-width="2.400"/></symbol>
<symbol id="redx" viewBox="0 0 12 12"><path d="M2.500 2.500l7 7M9.500 2.500l-7 7" stroke="#e0221b" stroke-width="3.400"/></symbol>
<symbol id="grayx" viewBox="0 0 12 12"><path d="M3 3l6 6M9 3L3 9" stroke="#888" stroke-width="3"/></symbol>
<symbol id="gear" viewBox="0 0 16 16"><circle cx="8" cy="8" r="6" fill="none" stroke="#a8a8a8" stroke-width="2.600" stroke-dasharray="2.700 2"/><circle cx="8" cy="8" r="5" fill="#d4d4d4" stroke="#a8a8a8"/><circle cx="8" cy="8" r="2.200" fill="#e5e5e5" stroke="#a8a8a8"/></symbol>
<symbol id="copy" viewBox="0 0 16 16"><path d="M6 1h6l3 3v8H6z" fill="#e2e2e2" stroke="#8f9389"/><path d="M1 4h6l3 3v8H1z" fill="#ececea" stroke="#8f9389"/><path d="M3 8h5M3 10h5M3 12h5M11 5h3M11 7h3M11 9h3" stroke="#8f9389"/></symbol>
<symbol id="paste" viewBox="0 0 16 16"><rect x="5" y="2" width="10" height="12" rx="1" fill="#c6c6c6" stroke="#aaa"/><path d="M1 5h6l3 3v7H1z" fill="#e8e8e8" stroke="#b5b5b5"/><path d="M3 9h5M3 11h5M3 13h5" stroke="#bbb"/></symbol>
<symbol id="refresh" viewBox="0 0 16 16"><path d="M2.500 7a5.500 5.500 0 0 1 9.500-3M13.500 9A5.500 5.500 0 0 1 4 12" fill="none" stroke="#3b87a8" stroke-width="2.200"/><path d="M14.500 2v5h-5zM1.500 14V9h5z" fill="#3b87a8"/></symbol>
<symbol id="floppy" viewBox="0 0 16 16"><path d="M1 1h14v14H3l-2-2z" fill="#3f6cab" stroke="#2f4f80"/><path d="M4 1h8v7H4z" fill="#f4f6fa"/><path d="M4 10.500h8V15H4z" fill="#555c66"/><path d="M6 11.500h2V14H6z" fill="#ddd"/></symbol>
<symbol id="fav" viewBox="0 0 16 16"><path d="M1 11V2h4l1 2h8v7z" fill="#f6d265" stroke="#b0903a"/><path d="M3 6h12v7H3z" fill="#fbe492" stroke="#b0903a"/><path d="M9.500 16l-5-5q-1-4 2.500-4l2.500 2L12 7q3.500 0 2.500 4z" fill="#d83b28"/></symbol>
<symbol id="cbe" viewBox="0 0 16 16"><path d="M1 1h9v14H1z" fill="url(#rainbow)"/><path d="M1 1h9v4H1z" fill="#e8741c"/><text x="5" y="15" font-size="17" font-family="Liberation Sans,sans-serif" font-style="italic" font-weight="700">e</text></symbol>
</defs>
</svg>

<div class="window">
<header class="titlebar">
  <svg class="applogo"><use href="#logo"/></svg><span class="apptitle">ParaView 5.11.0</span>
  <div class="winctl">
    <button aria-label="Minimize"><svg viewBox="0 0 12 12"><path d="M1 6.500h10" /></svg></button>
    <button aria-label="Maximize"><svg viewBox="0 0 12 12"><rect x="1.500" y="1.500" width="9" height="9" rx="1"/></svg></button>
    <button aria-label="Close"><svg viewBox="0 0 12 12"><path d="M1 1l10 10M11 1L1 11"/></svg></button>
  </div>
</header>
<nav class="menubar">
  <button><u>F</u>ile</button><button><u>E</u>dit</button><button><u>V</u>iew</button><button><u>S</u>ources</button><button>Fi<u>l</u>ters</button><button>E<u>x</u>tractors</button><button><u>T</u>ools</button><button><u>C</u>atalyst</button><button><u>M</u>acros</button><button><u>H</u>elp</button>
</nav>

<div class="toolbar">
  <i class="grip lead"></i>
  <button aria-label="Open"><svg><use href="#open"/></svg></button><button aria-label="Load state"><svg><use href="#load"/></svg></button><button aria-label="Save state"><svg><use href="#save"/></svg></button><button aria-label="Save extracts"><svg><use href="#extract"/></svg></button><button aria-label="Catalyst state"><svg><use href="#catalyst"/></svg></button>
  <i class="sep"></i>
  <button aria-label="Connect"><svg><use href="#connect"/></svg></button><button aria-label="Disconnect"><svg><use href="#disconnect"/></svg></button><button aria-label="Reset session"><svg><use href="#reset"/></svg></button>
  <i class="sep"></i>
  <button aria-label="Undo"><svg><use href="#undo"/></svg></button><button aria-label="Redo"><svg><use href="#redo"/></svg></button>
  <i class="sep"></i>
  <button aria-label="Auto apply"><svg><use href="#autoapply"/></svg></button><button aria-label="Find data"><svg><use href="#cropbar"/></svg></button><button class="drop" aria-label="Color palette"><svg><use href="#palette"/></svg></button>
  <i class="grip"></i>
  <button aria-label="First frame"><svg><use href="#first"/></svg></button><button aria-label="Previous frame"><svg><use href="#prev"/></svg></button><button aria-label="Reverse"><svg><use href="#back"/></svg></button><button aria-label="Play"><svg><use href="#play"/></svg></button><button aria-label="Next frame"><svg><use href="#next"/></svg></button><button aria-label="Last frame"><svg><use href="#last"/></svg></button><button aria-label="Loop"><svg><use href="#loop"/></svg></button>
  <i class="grip"></i>
  <label class="tlabel" for="time">Time:</label>
  <span class="combo w100"><select id="time"><option>8.61244e-06</option></select></span>
  <span class="spin"><input aria-label="Time step" value="24"><span class="steps"><button aria-label="Up" class="sup"></button><button aria-label="Down" class="sdn"></button></span></span>
  <span class="tmax">max is 62</span>
  <i class="grip"></i>
  <button aria-label="Adjust camera"><svg><use href="#camwrench"/></svg></button><button aria-label="Add camera link"><svg><use href="#camplus"/></svg></button>
</div>

<div class="toolbar">
  <i class="grip lead"></i>
  <button class="on" aria-label="Color legend"><svg><use href="#cbar"/></svg></button><button aria-label="Edit color map"><svg><use href="#editmap"/></svg></button><button aria-label="Separate color map"><svg><use href="#separate"/></svg></button><button aria-label="Rescale"><svg><use href="#rescale"/></svg></button><button aria-label="Rescale custom"><svg><use href="#rescalec"/></svg></button><button aria-label="Rescale temporal"><svg><use href="#rescalet"/></svg></button><button aria-label="Rescale visible"><svg><use href="#rescalev"/></svg></button>
  <span class="combo w180 has-icon"><svg><use href="#cell"/></svg><select aria-label="Color by"><option>bt</option></select></span>
  <span class="combo w72 off"><select aria-label="Component" disabled><option></option></select></span>
  <i class="grip"></i>
  <span class="combo w150"><select aria-label="Representation style"><option>Surface</option></select></span>
  <i class="grip"></i>
  <button aria-label="Reset camera"><svg><use href="#out4"/></svg></button><button aria-label="Zoom to data"><svg><use href="#zdata"/></svg></button><button aria-label="Reset camera closest"><svg><use href="#rclose"/></svg></button><button aria-label="Zoom closest"><svg><use href="#zclose"/></svg></button><button aria-label="Zoom to box"><svg><use href="#zbox"/></svg></button><button aria-label="+X"><svg><use href="#px"/></svg></button><button aria-label="-X"><svg><use href="#mx"/></svg></button><button aria-label="+Y"><svg><use href="#py"/></svg></button><button aria-label="-Y"><svg><use href="#my"/></svg></button><button aria-label="+Z"><svg><use href="#pz"/></svg></button><button aria-label="-Z"><svg><use href="#mz"/></svg></button><button aria-label="Isometric"><svg><use href="#iso"/></svg></button><button aria-label="Rotate +90"><svg><use href="#rotp"/></svg></button><button aria-label="Rotate -90"><svg><use href="#rotm"/></svg></button>
  <i class="grip"></i>
  <button aria-label="Orientation axes"><svg><use href="#axes"/></svg></button><button aria-label="Show center"><svg><use href="#center1"/></svg></button><button aria-label="Reset center"><svg><use href="#center2"/></svg></button><button aria-label="Pick center"><svg><use href="#center3"/></svg></button>
  <i class="grip"></i>
  <button class="on" aria-label="Light"><svg><use href="#bulb"/></svg></button>
  <i class="grip"></i>
</div>

<div class="toolbar wide">
  <i class="grip lead"></i>
  <button aria-label="Calculator"><svg><use href="#calc"/></svg></button><button aria-label="Contour"><svg><use href="#contour"/></svg></button><button aria-label="Clip"><svg><use href="#clip"/></svg></button><button aria-label="Slice"><svg><use href="#slice"/></svg></button><button aria-label="Threshold"><svg><use href="#thresh"/></svg></button><button aria-label="Extract subset"><svg><use href="#subset"/></svg></button><button aria-label="Glyph"><svg><use href="#glyph"/></svg></button><button aria-label="Stream tracer"><svg><use href="#stream"/></svg></button><button aria-label="Warp"><svg><use href="#warp"/></svg></button><button aria-label="Group datasets"><svg><use href="#group"/></svg></button><button aria-label="Extract level"><svg><use href="#ungroup"/></svg></button>
  <i class="grip"></i>
  <button aria-label="Box plot"><svg><use href="#boxplot"/></svg></button><button aria-label="Extract selection"><svg><use href="#plotsel"/></svg></button><button aria-label="Histogram"><svg><use href="#histo"/></svg></button><button aria-label="Plot global"><svg><use href="#plottime"/></svg></button><button aria-label="Plot over line"><svg><use href="#plotline"/></svg></button><button aria-label="Plot selection"><svg><use href="#plotsel2"/></svg></button><button aria-label="Probe"><svg><use href="#probe"/></svg></button><button aria-label="Programmable"><svg><use href="#braces"/></svg></button>
  <i class="grip"></i>
  <button aria-label="Ruler"><svg><use href="#ruler"/></svg></button>
</div>

<main class="work">
<aside class="dock">
  <div class="dockhead"><h2>Pipeline Browser</h2><button aria-label="Float"><svg><use href="#float"/></svg></button><button aria-label="Close"><svg><use href="#close"/></svg></button></div>
  <div class="tree">
    <ul>
      <li><span class="eye"></span><span class="node"><i class="g host"><svg><use href="#host"/></svg></i><span>builtin:</span></span></li>
      <li><span class="eye"><svg><use href="#eyeoff"/></svg></span><span class="node"><i class="g v exp"></i><svg class="cube"><use href="#cube"/></svg><span>Electromagnetic Results</span></span></li>
      <li><span class="eye"><svg><use href="#eyeoff"/></svg></span><span class="node"><i class="g v"></i><i class="g v h"></i><svg class="cube"><use href="#cube"/></svg><span>Time/Harmonic Filter</span></span></li>
      <li><span class="eye"><svg><use href="#eyeoff"/></svg></span><span class="node"><i class="g v"></i><i class="g v h"></i><svg class="cube"><use href="#cube"/></svg><span>Air</span></span></li>
      <li><span class="eye"><svg><use href="#eyeoff"/></svg></span><span class="node"><i class="g v"></i><i class="g v h"></i><svg class="cube"><use href="#cube"/></svg><span>Air</span></span></li>
      <li><span class="eye"><svg><use href="#eyeon"/></svg></span><span class="node sel"><i class="g v"></i><i class="g v h"></i><svg class="cube"><use href="#cubesel"/></svg><span>Core</span></span></li>
      <li><span class="eye"><svg><use href="#eyeoff"/></svg></span><span class="node"><i class="g v"></i><i class="g v h"></i><svg class="cube"><use href="#cube"/></svg><span>Gap</span></span></li>
      <li><span class="eye"><svg><use href="#eyeoff"/></svg></span><span class="node"><i class="g v"></i><i class="g v h"></i><svg class="cube"><use href="#cube"/></svg><span>Bobbin</span></span></li>
    </ul>
    <div class="sbar"><i class="sb up"></i><i class="thumb tall"></i><i class="rest"></i><i class="sb dn"></i></div>
  </div>
  <div class="hsplit"></div>
  <div class="tabs"><button class="tab cur">Properties</button><button class="tab">Information</button></div>
  <div class="dockhead"><h2>Properties</h2><button aria-label="Float"><svg><use href="#float"/></svg></button><button aria-label="Close"><svg><use href="#close"/></svg></button></div>
  <div class="actions"><button class="btn" disabled><svg><use href="#applyg"/></svg>Apply</button><button class="btn" disabled><svg><use href="#forbid"/></svg>Reset</button><button class="btn"><svg><use href="#redx"/></svg>Delete</button><button class="btn help">?</button></div>
  <div class="search"><input type="text" aria-label="Search" placeholder="Search ... (use Esc to clear text)"><button class="btn pressed" aria-label="Advanced"><svg><use href="#gear"/></svg></button></div>
  <div class="scroller">
    <div class="props">
      <label class="check first"><input type="checkbox">Use Continuous Cell Range</label>
      <label class="check"><input type="checkbox">Invert</label>
      <div class="row disp"><button class="section"><i></i>Display (UnstructuredGridRepresentation)</button><button class="btn sq" aria-label="Copy"><svg><use href="#copy"/></svg></button><button class="btn sq" disabled aria-label="Paste"><svg><use href="#paste"/></svg></button><button class="btn sq" aria-label="Reload"><svg><use href="#refresh"/></svg></button><button class="btn sq" aria-label="Save defaults"><svg><use href="#floppy"/></svg></button></div>
      <div class="row rep"><label for="rep">Representation</label><span class="combo grow"><select id="rep"><option>Surface</option></select></span></div>
      <h3>Coloring</h3>
      <div class="row color"><span class="combo grow has-icon"><svg><use href="#cell"/></svg><select aria-label="Coloring array"><option>bt</option></select></span><span class="combo grow off"><select aria-label="Coloring component" disabled><option></option></select></span></div>
      <div class="row edit"><button class="btn grow"><svg><use href="#editmap"/></svg>Edit</button><button class="btn sq" aria-label="Separate"><svg><use href="#separate"/></svg></button><button class="btn sq" aria-label="Rescale"><svg><use href="#rescale"/></svg></button><button class="btn sq" aria-label="Rescale custom"><svg><use href="#rescalec"/></svg></button><button class="btn sq" aria-label="Rescale temporal"><svg><use href="#rescalet"/></svg></button><button class="btn sq" aria-label="Presets"><svg><use href="#fav"/></svg></button><button class="btn sq pressed" aria-label="Legend"><svg><use href="#cbar"/></svg></button><button class="btn sq" aria-label="Edit legend"><svg><use href="#cbe"/></svg></button></div>
      <h3>Scalar Coloring</h3>
      <label class="check after"><input type="checkbox" checked>Map Scalars</label>
      <label class="check"><input type="checkbox" checked>Interpolate Scalars Before Mapping</label>
      <h3 class="styling">Styling</h3>
      <div class="row opac"><label for="op">Opacity</label><input id="op" type="range" min="0" max="1" step="0.01" value="1"><input type="text" aria-label="Opacity value" value="1"></div>
    </div>
    <div class="sbar"><i class="sb up"></i><i class="rest gap"></i><i class="thumb short"></i><i class="rest"></i><i class="sb dn"></i></div>
  </div>
</aside>
<div class="vsplit"></div>

<section class="views">
  <div class="vtabs"><div class="vtab cur"><svg class="winico"><use href="#win"/></svg>Layout #1<button aria-label="Close layout"><svg><use href="#close"/></svg></button></div><button class="vtab add">+</button></div>
  <div class="viewbar">
    <button aria-label="Camera undo"><svg><use href="#camundo"/></svg></button><button aria-label="Camera redo"><svg><use href="#camredo"/></svg></button><i class="sep"></i>
    <button aria-label="Capture"><svg class="cap"><use href="#capture"/></svg></button><i class="sep"></i>
    <button class="t3d">3D</button><button aria-label="Adjust camera"><svg><use href="#camedit"/></svg></button><i class="sep"></i>
    <button aria-label="Add selection"><svg><use href="#sadd"/></svg></button><button aria-label="Subtract selection"><svg><use href="#ssub"/></svg></button><button aria-label="Toggle selection"><svg><use href="#stog"/></svg></button><i class="sep"></i>
    <button aria-label="Select cells on"><svg><use href="#scell"/></svg></button><button aria-label="Select points on"><svg><use href="#spts"/></svg></button><button aria-label="Select cells through"><svg><use href="#sfrus"/></svg></button><button aria-label="Select points through"><svg><use href="#sfrp"/></svg></button><button aria-label="Polygon cells"><svg><use href="#spoly"/></svg></button><button aria-label="Polygon points"><svg><use href="#spolyp"/></svg></button><button aria-label="Select block"><svg><use href="#sblock"/></svg></button><button aria-label="Interactive cell data"><svg><use href="#gcube"/></svg></button><button aria-label="Interactive point data"><svg><use href="#gpt"/></svg></button><button class="on" aria-label="Interactive select cells"><svg><use href="#icell"/></svg></button><button aria-label="Interactive select points"><svg><use href="#pts"/></svg></button><button aria-label="Hover cells"><svg><use href="#qcell"/></svg></button><button aria-label="Hover points"><svg><use href="#qpt"/></svg></button><button aria-label="Grow"><svg><use href="#plus"/></svg></button><button aria-label="Shrink"><svg><use href="#minus"/></svg></button><button class="more">»</button>
    <span class="vname">RenderView1</span>
    <span class="vbtns"><button aria-label="Split horizontal"><svg><use href="#splith"/></svg></button><button aria-label="Split vertical"><svg><use href="#splitv"/></svg></button><button aria-label="Maximize view"><svg class="big"><use href="#win"/></svg></button><button aria-label="Close view"><svg class="small"><use href="#close"/></svg></button></span>
  </div>
  <div class="render">
  <svg viewBox="493 226 871 581" role="img" aria-label="RenderView1">
    <rect x="726" y="313" width="404" height="407" fill="url(#core)"/>
    <g clip-path="url(#steel)">
      <path d="M866 420L880 390 910 370 945 370 978 390 990 420V620L975 645 940 625H910L880 650 866 620Z" fill="#526cb1"/>
      <path d="M866 440h124v150H866z" fill="#536db2"/>
      <g transform="translate(660 260) scale(.33333)">
        <path fill="#5069b1" d="M300 320 420 225 530 230 615 233 560 295 420 290 350 300 300 430 240 480 198 470V430Z"/>
        <path fill="#34449a" d="M198 158H310L275 235 198 278Z"/>
        <path fill="#4055a3" d="M310 158 345 200 275 235Z"/>
        <path fill="#485fa9" d="M310 158H440L345 200Z"/>
        <path fill="#445aa7" d="M275 235 198 278V350L310 330 360 285Z"/>
        <path fill="#4961ab" d="M198 350 310 330 300 400 198 440Z"/>
        <path fill="#4c66ae" d="M345 200 275 235 360 285 430 225Z"/>
        <path fill="#4f6ab1" d="M440 158H600L510 215 430 225 345 200Z"/>
        <path fill="#4963ac" d="M600 158H735L615 233 510 215Z"/>
        <path fill="#526eb3" d="M430 225 510 215 530 260 450 270Z"/>
        <path fill="#5872b3" d="M530 230 615 233 640 245 600 250Z"/>
        <path fill="#435aa6" d="M735 158 808 236 615 233Z"/>
        <path fill="#2f3b92" d="M735 158H860L808 236Z"/>
        <path fill="#3c4f9f" d="M860 158 930 244 808 236Z"/>
        <path fill="#435ba6" d="M860 158H990L930 244Z"/>
        <path fill="#4963ac" d="M990 158 1050 232 930 244Z"/>
        <path fill="#4b66ad" d="M615 233 708 272 640 305 560 295Z"/>
        <path fill="#3e51a1" d="M615 233 808 236 780 310 725 345 708 272Z"/>
        <path fill="#4054a3" d="M808 236 930 244 857 300 835 330 815 355 780 310Z"/>
        <path fill="#465da8" d="M857 300 930 244 940 315 925 370 815 355Z"/>
        <path fill="#4f69b0" d="M708 272 725 345 780 310 815 355 800 440 740 430 690 380 668 330 640 305Z"/>
        <path fill="#4d66ae" d="M740 430 815 355 925 370 890 440 810 470Z"/>
        <path fill="#4960aa" d="M815 355 860 300 900 340 880 400Z"/>
        <path fill="#4b66ae" d="M990 158H1200L1165 212 1050 232Z"/>
        <path fill="#4f6ab1" d="M990 158 1165 212 1110 285 1050 232Z"/>
        <path fill="#475fa9" d="M1200 158H1235L1260 212H1165Z"/>
        <path fill="#4259a6" d="M1235 158H1310L1330 230 1260 212Z"/>
        <path fill="#334398" d="M1310 158H1410V255L1330 230Z"/>
        <path fill="#4055a3" d="M1260 212 1330 230 1410 255 1300 300Z"/>
        <path fill="#465da8" d="M1300 300 1410 255V345L1370 395 1320 340Z"/>
        <path fill="#4d67af" d="M1370 395 1410 345V460L1340 450Z"/>
        <path fill="#4d68af" d="M1050 232 1165 212 1280 262 1320 340 1250 300 1140 300 1050 300 993 297 930 244Z"/>
        <path fill="#536eb2" d="M350 300 420 285 560 295 618 305V355H390L380 470 330 440 310 330Z"/>
        <path fill="#5974b4" d="M350 300 405 305 450 355H390L340 370Z"/>
        <path fill="#5772b4" d="M618 305 668 330 700 390 680 470 635 500 618 600Z"/>
        <path fill="#607bb7" d="M618 305 668 330 685 380 650 400 635 445 618 420Z"/>
        <path fill="#7188bb" d="M618 305 668 330 618 355Z"/>
        <path fill="#536eb2" d="M993 297 1080 300 1140 295 1250 300 1320 350 1330 430 1280 460 1218 480V355H990Z"/>
        <path fill="#5772b4" d="M940 315 993 297V600L970 480 920 440 925 370Z"/>
        <path fill="#607bb7" d="M940 315 993 297V420L975 440 960 400 930 372Z"/>
        <path fill="#7188bb" d="M940 315 993 297V355L930 372Z"/>
        <path fill="#5b76b5" d="M1180 340 1235 310 1270 345 1250 380 1218 400V355H1160Z"/>
        <path fill="#93a4b8" d="M374 340 405 335 395 355H390V362Z"/>
        <path fill="#8b9fba" d="M1205 338 1230 340 1228 362 1218 355Z"/>
        <path d="M618 769H990" stroke="#475ca9" stroke-width="8"/>
        <path d="M930 244 940 316 857 301Z" fill="none" stroke="#ff00f7" stroke-width="6"/>
      </g>
      <g transform="translate(660 490) scale(.33333)">
        <path fill="#4a63ac" d="M198 340 250 380 330 450 330 560 440 620 580 690H198Z"/>
        <path fill="#445aa7" d="M198 500 255 475 305 522 270 580Z"/>
        <path fill="#3c4fa0" d="M198 500 270 580 198 688Z"/>
        <path fill="#37479b" d="M270 580 312 688H198Z"/>
        <path fill="#3e52a2" d="M270 580 355 628 312 688Z"/>
        <path fill="#4359a6" d="M305 522 325 570 438 618 355 628 270 580Z"/>
        <path fill="#4961ab" d="M355 628 438 618 400 688H312Z"/>
        <path fill="#536eb2" d="M310 420 380 400 390 495H618V540L600 568 530 582 438 618 350 565 325 500Z"/>
        <path fill="#4e69b0" d="M438 618 530 582 620 688H400Z"/>
        <path fill="#4b64ad" d="M530 582 600 568 655 528 680 612 612 688Z"/>
        <path fill="#4257a5" d="M680 612 742 688H612Z"/>
        <path fill="#3e51a1" d="M710 545 758 525 785 598 742 688 680 612Z"/>
        <path fill="#445ba7" d="M758 525 782 490 820 525 785 598Z"/>
        <path fill="#2f3a91" d="M785 598 868 688H742Z"/>
        <path fill="#3e51a1" d="M820 525 875 570V688H868L785 598Z"/>
        <path fill="#3a4c9d" d="M875 570 960 615 875 688Z"/>
        <path fill="#4359a6" d="M960 615 1000 688H875Z"/>
        <path fill="#4a62ac" d="M700 450 782 490 758 525 710 545 680 612 655 528Z"/>
        <path fill="#465da9" d="M820 525 860 475 915 500 950 540 875 570Z"/>
        <path fill="#4c66ae" d="M875 570 950 540 1060 552 1085 618H960Z"/>
        <path fill="#4e69b0" d="M960 615 1085 618 1000 688Z"/>
        <path fill="#4b65ad" d="M1085 618 1170 628 1210 688H1000Z"/>
        <path fill="#465da9" d="M1170 628 1230 615 1300 688H1210Z"/>
        <path fill="#536eb2" d="M950 540 990 495H1218L1225 400 1290 420 1270 520 1190 570 1060 555Z"/>
        <path fill="#4960ab" d="M1270 520 1330 485 1410 500V570L1365 525 1260 570Z"/>
        <path fill="#3e51a1" d="M1260 570 1365 525 1325 610 1230 615Z"/>
        <path fill="#4256a4" d="M1365 525 1410 575 1325 630Z"/>
        <path fill="#4156a4" d="M1230 615 1325 610 1302 688H1290Z"/>
        <path fill="#334398" d="M1410 575V688H1302L1325 630Z"/>
        <path fill="#5a75b5" d="M618 400 650 430 685 490 652 528 600 568 618 495Z"/>
        <path fill="#7189bb" d="M635 480 655 528 598 568 618 510Z"/>
        <path fill="#5a75b5" d="M990 400 950 430 912 490 950 540 990 495Z"/>
        <path fill="#7189bb" d="M958 485 990 495 1022 554 950 538Z"/>
        <path fill="#5c77b5" d="M340 480 390 440 430 500 435 530 385 545 345 520Z"/>
        <path fill="#5c77b5" d="M1218 440 1265 490 1250 530 1190 545 1175 500H1218Z"/>
        <path fill="#b9b49f" d="M378 488 391 495 392 508H378ZM1218 492 1228 488V508H1214Z"/>
      </g>
    </g>
    <path d="M790 378h76v10h-66v257l-10 10z" fill="#1c2842"/><path d="M790 378h76v10h-66z" fill="#1a243a"/><path d="M790 655l10-10h66v10z" fill="#41527f"/>
    <path d="M990 378h76v277l-10-10V388h-66z" fill="#181d33"/><path d="M990 378h76l-10 10h-66z" fill="#1a243a"/><path d="M990 645h66l10 10h-76z" fill="#41527f"/>
    <rect x="800" y="388" width="66" height="257" fill="#fff"/><rect x="990" y="388" width="66" height="257" fill="#fff"/>
    <rect x="725.500" y="312.500" width="405" height="407.500" fill="none" stroke="#aab0b0"/>
    <g class="axis">
      <text x="928" y="280">X Axis</text><text x="741" y="300">-0.03</text><text x="803" y="300">-0.02</text><text x="865" y="300">-0.01</text><text x="928" y="300">0</text><text x="989" y="300">0.01</text><text x="1052" y="300">0.02</text><text x="1113" y="300">0.03</text>
      <text x="928" y="759">X Axis</text><text x="741" y="739">-0.03</text><text x="803" y="739">-0.02</text><text x="865" y="739">-0.01</text><text x="928" y="739">0</text><text x="989" y="739">0.01</text><text x="1052" y="739">0.02</text><text x="1113" y="739">0.03</text>
      <text x="680" y="520">Y Axis</text><text x="1176" y="520">Y Axis</text>
    </g>
    <g class="axis end"><text x="716" y="334">0.03</text><text x="716" y="396">0.02</text><text x="716" y="458">0.01</text><text x="716" y="520">0</text><text x="716" y="582">-0.01</text><text x="716" y="644">-0.02</text><text x="716" y="706">-0.03</text></g>
    <g class="axis start"><text x="1140" y="334">0.03</text><text x="1140" y="396">0.02</text><text x="1140" y="458">0.01</text><text x="1140" y="520">0</text><text x="1140" y="582">-0.01</text><text x="1140" y="644">-0.02</text><text x="1140" y="706">-0.03</text></g>
    <rect x="1237" y="454" width="16" height="191" fill="url(#cool)"/>
    <path d="M1249 453.500h12M1249 482.500h12M1249 524.500h12M1249 566.500h12M1250 608.500h12M1250 645.500h12" stroke="#000"/>
    <g class="legend"><text x="1267" y="458">4.7e-01</text><text x="1267" y="487">0.4</text><text x="1267" y="528">0.3</text><text x="1267" y="570">0.2</text><text x="1267" y="612">0.1</text><text x="1267" y="649">8.8e-03</text><text transform="translate(1338 557) rotate(-90)">bt</text></g>
  </svg>
  </div>
</section>
</main>

<footer class="status">
  <button class="btn" disabled aria-label="Abort"><svg><use href="#grayx"/></svg></button>
  <div class="msg"></div>
  <div class="mem" role="progressbar" aria-label="Memory" aria-valuenow="35"><i style="width:35%"></i><span>DESKTOP-KFHJ6TB: 22.1 GiB/63.3 GiB 35.0%</span></div>
  <svg class="size" viewBox="0 0 12 12"><path d="M10 1h2M7 4h2M10 4h2M4 7h2M7 7h2M10 7h2M1 10h2M4 10h2M7 10h2M10 10h2" stroke="#b5b5b5" stroke-width="1.500"/></svg>
</footer>

<svg class="callout" viewBox="296 206 664 100" aria-label="Interactive Select Cells">
  <path class="arrow" d="M824 258L911 225 902 216.500 950 214.500 912 246 914 233 826 265.500Z"/>
  <text x="300" y="293">Interactive Select Cells</text>
</svg>
</div>
</body>
</html>
```
FILE: styles.css
```css
* { box-sizing: border-box; }
body { margin: 0; background: #454a50; font: 13px/16px "Noto Sans", "Open Sans", sans-serif; color: #000; }
button, input, select { font: inherit; color: inherit; margin: 0; padding: 0; }
button { background: none; border: 0; display: inline-flex; align-items: center; justify-content: center; }
h2, h3, ul { margin: 0; padding: 0; font-size: inherit; list-style: none; }
.sprite { position: absolute; width: 0; height: 0; }

.window { position: relative; display: flex; flex-direction: column; height: calc(100vh - 2px); min-height: 640px; background: #f0f0f0; border: solid #a3a3a3; border-width: 1px 1px 0; border-radius: 8px; overflow: hidden; font-size: 12px; }

.titlebar { flex: none; display: flex; align-items: center; height: 30px; padding-left: 8px; background: #f3f3f3; }
.applogo { width: 16px; height: 12px; margin-right: 5px; }
.apptitle { font-family: "Open Sans", sans-serif; }
.winctl { margin-left: auto; display: flex; }
.winctl button { width: 46px; height: 30px; }
.winctl svg { width: 12px; height: 12px; fill: none; stroke: #111; }
.menubar { flex: none; display: flex; gap: 1px; height: 22px; padding: 2px 0 0 2px; background: #efefef; border-bottom: 1px solid #d4d4d4; }
.menubar button { padding: 0 7px; }
.menubar u { text-underline-offset: 2px; }

.toolbar { flex: none; display: flex; align-items: center; height: 39px; background: linear-gradient(#fbfbfb, #ececec); border-bottom: 1px solid #b3b3b3; }
.toolbar > * { flex: none; }
.toolbar > button { position: relative; width: 32px; height: 31px; border: 1px solid transparent; border-radius: 2px; }
.toolbar.wide { height: 38px; }
.toolbar.wide > button { width: 33px; }
.toolbar.wide .grip { width: 16px; }
.toolbar.wide .grip.lead { width: 12px; }
.toolbar > button svg { width: 22px; height: 22px; }
.toolbar > .on, .viewbar > .on { background: #dcdcdc; border: 1px solid #ababab; }
.drop::after { content: ""; position: absolute; right: 2px; bottom: 3px; border: 3px solid transparent; border-top-color: #555; border-bottom: 0; }
.grip { width: 17px; height: 18px; background: radial-gradient(circle, #b4b4b4 38%, transparent 42%) 7px 0 / 3px 3px repeat-y, radial-gradient(circle, #b4b4b4 38%, transparent 42%) 10px 0 / 3px 3px repeat-y; }
.grip.lead { width: 13px; background-position: 4px 0, 7px 0; }
.sep { width: 6px; height: 20px; background: linear-gradient(#cfcfcf, #cfcfcf) 3px 0 / 1px 100% no-repeat; }
.tlabel { width: 36px; }
.tmax { padding-left: 2px; }

.combo { position: relative; display: flex; height: 24px; }
.combo select { appearance: none; width: 100%; height: 24px; padding: 0 18px 0 4px; border: 1px solid #acacac; border-radius: 3px; background: linear-gradient(#fff, #eee); opacity: 1; }
.combo::after { content: ""; position: absolute; right: 7px; top: 10px; border: 4px solid transparent; border-top-color: #555; border-bottom: 0; }
.combo.off::after { border-top-color: #aaa; }
.combo.off select { border-color: #c8c8c8; background: #f2f2f2; }
.combo svg { position: absolute; left: 6px; top: 5px; width: 15px; height: 15px; }
.combo.has-icon select { padding-left: 24px; }
.w100 { width: 100px; } .w180 { width: 180px; } .w72 { width: 72px; margin-left: 4px; } .w150 { width: 150px; }
.spin { display: flex; width: 42px; height: 23px; margin-left: 3px; border: 1px solid #acacac; border-radius: 3px; background: #fff; overflow: hidden; }
.spin input { width: 27px; border: 0; padding-left: 4px; background: none; }
.steps { display: flex; flex-direction: column; flex: 1; border-left: 1px solid #acacac; background: #f4f4f4; }
.steps button { flex: 1; }
.sup::after { content: ""; border: 4px solid transparent; border-bottom-color: #555; border-top: 0; }
.sdn::after { content: ""; border: 4px solid transparent; border-top-color: #555; border-bottom: 0; }

.work { flex: 1; display: flex; min-height: 0; }
.dock { flex: none; width: 482px; display: flex; flex-direction: column; min-height: 0; }
.dockhead { flex: none; display: flex; align-items: center; gap: 3px; height: 21px; padding: 1px 2px 0 4px; }
.dockhead h2 { flex: 1; font-weight: 400; }
.dockhead svg { display: block; width: 11px; height: 11px; }
.tree { flex: none; display: flex; height: 179px; margin-right: 1px; background: #fff; border: 1px solid #b0b0b0; overflow: hidden; }
.tree ul { flex: 1; padding-top: 2px; background: linear-gradient(#888, #888) 46px 0 / 1px 3px no-repeat; }
.tree li { display: flex; align-items: center; height: 22px; }
.eye { width: 24px; height: 22px; margin-right: 13px; display: flex; align-items: center; padding-left: 4px; }
.eye svg { width: 14px; height: 10px; }
.node { display: flex; align-items: center; height: 18px; padding-right: 4px; }
.node > span { padding-left: 2px; }
.node.sel { background: #0f7fdc; color: #fff; }
.g { position: relative; width: 18px; height: 22px; display: flex; align-items: center; justify-content: center; }
.g.host svg { width: 8px; height: 14px; }
.v { background: linear-gradient(#888, #888) 9px 0 / 1px 100% no-repeat; }
.h { background: linear-gradient(#888, #888) 9px 0 / 1px 100% no-repeat, linear-gradient(#888, #888) 9px 11px / 9px 1px no-repeat; }
.exp::after { content: ""; width: 9px; height: 9px; border: 1px solid #777; background: linear-gradient(#000, #000) 1px 3px / 5px 1px no-repeat #fff; }
.cube { width: 17px; height: 16px; }
.sbar { flex: none; width: 14px; display: flex; flex-direction: column; border-left: 1px solid #b8b8b8; background: #e3e3e3; }
.sb { height: 13px; background: #fafafa; border-bottom: 1px solid #bbb; display: flex; align-items: center; justify-content: center; }
.sb.dn { border-top: 1px solid #bbb; border-bottom: 0; }
.sb::after { content: ""; border: 4px solid transparent; }
.sb.up::after { border-bottom-color: #555; border-top: 0; }
.sb.dn::after { border-top-color: #555; border-bottom: 0; }
.thumb { background: #fcfcfc; border-bottom: 1px solid #bbb; }
.thumb.tall { height: 54px; }
.thumb.short { height: 37px; border-top: 1px solid #bbb; }
.rest { flex: 1; }
.rest.gap { flex: none; height: 20px; }
.hsplit { flex: none; height: 8px; background: repeating-linear-gradient(90deg, #b5b5b5 0 1px, transparent 1px 3px) center 3px / 16px 1px no-repeat; }
.tabs { flex: none; display: flex; align-items: flex-end; height: 26px; margin-right: 1px; border-bottom: 1px solid #b3b3b3; }
.tab { height: 24px; padding: 0 11px; border: 1px solid #b3b3b3; border-left: 0; border-bottom: 0; background: #dedede; border-radius: 2px 2px 0 0; }
.tab.cur { height: 27px; margin-bottom: -1px; background: linear-gradient(#fcfcfc, #f0f0f0); border-left: 1px solid #b3b3b3; }

.btn { gap: 4px; height: 24px; border: 1px solid #b0b0b0; border-radius: 3px; background: linear-gradient(#fefefe, #ededed); }
.btn:disabled { color: #808080; border-color: #c6c6c6; background: #f1f1f1; }
.btn svg { width: 16px; height: 16px; }
.btn.pressed { background: #dadada; }
.actions { flex: none; display: grid; grid-template-columns: repeat(4, 1fr); gap: 2px; margin: 7px 9px 6px; }
.actions svg { width: 14px; height: 14px; }
.btn.help { color: #8fb37a; font-size: 16px; font-weight: 700; }
.search { flex: none; display: flex; gap: 2px; margin: 0 9px 6px; }
.search input { flex: 1; height: 24px; padding: 0 2px; border: 1px solid #acacac; border-radius: 3px; background: #fff; }
.search input::placeholder { color: #808080; }
.search .btn { width: 24px; height: 23px; }
.scroller { flex: 1; display: flex; min-height: 0; margin: 0 9px 9px; overflow: hidden; }
.props { flex: 1; min-width: 0; }
.props > .row { display: flex; align-items: center; gap: 4px; }
.grow { flex: 1; }
.check { display: flex; align-items: center; gap: 6px; height: 26px; }
.check.first { margin-top: -11px; }
.check.after { margin-top: 5px; }
.check input { appearance: none; width: 13px; height: 13px; border: 1px solid #b0b0b0; background: #fff; display: flex; align-items: center; justify-content: center; }
.check input:checked::after { content: ""; width: 4px; height: 8px; margin-bottom: 2px; border: solid #111; border-width: 0 2px 2px 0; transform: rotate(38deg); }
.disp { margin-top: 3px; }
.section { flex: 1; justify-content: flex-start; gap: 7px; height: 26px; padding-left: 10px; border: 1px solid #b3b3b3; background: #eaeaea; font-weight: 700; font-size: 13px; white-space: nowrap; }
.section i { width: 14px; height: 5px; background: #2f93c8; }
.sq { flex: none; width: 28px; }
.rep { margin-top: 6px; }
.rep label, .opac label { width: 97px; }
h3 { height: 18px; margin-top: 7px; line-height: 18px; border-bottom: 1px solid #a8a8a8; }
.props h3 { font-size: 13px; font-weight: 700; }
.color { margin-top: 6px; padding-right: 32px; }
.edit { margin-top: 4px; }
h3.styling { margin-top: 5px; }
.opac { margin-top: 5px; height: 24px; }
.opac input[type=text] { flex: 1; width: 0; height: 24px; padding-left: 3px; border: 1px solid #acacac; border-radius: 3px 3px 0 0; background: #fff; }
.opac input[type=range] { appearance: none; width: 171px; height: 14px; background: linear-gradient(#1b7bc9, #1b8fe8) 0 4px / 100% 5px no-repeat; border-radius: 2px; margin-right: 3px; }
.opac input[type=range]::-webkit-slider-thumb { appearance: none; width: 13px; height: 13px; border: 1px solid #a0a0a0; border-radius: 3px; background: #fafafa; }

.vsplit { flex: none; width: 6px; background: radial-gradient(circle, #b0b0b0 35%, transparent 40%) 2px 0 / 3px 3px repeat-y; background-clip: content-box; padding: 315px 0 307px; }
.views { flex: 1; min-width: 0; display: flex; flex-direction: column; border-left: 1px solid #b3b3b3; margin-bottom: 2px; }
.vtabs { flex: none; display: flex; align-items: flex-end; height: 28px; border-bottom: 1px solid #b3b3b3; padding-top: 1px; }
.vtab { display: flex; align-items: center; height: 24px; border: 1px solid #b3b3b3; border-bottom: 0; border-left: 0; border-radius: 2px 2px 0 0; background: #e6e6e6; }
.vtab.cur { height: 27px; margin-bottom: -1px; padding: 0 13px 0 11px; gap: 3px; background: linear-gradient(#fff, #f4f4f4); }
.vtab svg { display: block; width: 11px; height: 11px; }
.vtab svg.winico { width: 16px; height: 16px; margin-right: 1px; }
.vtab.add { width: 31px; }
.viewbar { flex: none; display: flex; align-items: center; height: 27px; padding: 0 1px; }
.viewbar > button { flex: none; width: 26px; height: 26px; border: 1px solid transparent; border-radius: 2px; }
.viewbar .sep { flex: none; height: 14px; }
.viewbar svg { width: 16px; height: 16px; }
.viewbar svg.cap { width: 18px; height: 18px; }
.t3d { font: 700 11px Roboto, sans-serif; color: #5f6358; }
.more { font-size: 14px; }
.vname { margin-left: auto; font-size: 13px; font-weight: 700; text-decoration: underline; text-underline-offset: 2px; }
.vbtns { display: flex; gap: 1px; margin: 0 1px 0 11px; }
.vbtns button { width: 26px; height: 25px; border: 1px solid #b3b3b3; border-radius: 3px; background: linear-gradient(#fefefe, #f0f0f0); }
.vbtns svg.big { width: 18px; height: 18px; }
.vbtns svg.small { width: 11px; height: 11px; }
.render { flex: 1; min-height: 0; margin: 0 1px; border: 2px solid #0000f5; background: #fff; }
.render svg { display: block; width: 100%; height: 100%; }
.axis { font: 13px Lato, sans-serif; fill: #cfcfcb; text-anchor: middle; }
.axis.end { text-anchor: end; }
.axis.start { text-anchor: start; }
.legend { font: 16px Lato, sans-serif; fill: #111; }

.status { flex: none; display: flex; align-items: center; height: 29px; padding: 2px 10px 0 447px; }
.status .btn { width: 20px; height: 19px; }
.status .btn svg { width: 12px; height: 12px; }
.msg { flex: 1; height: 25px; margin: 0 6px 0 2px; border: 1px solid #b8b8b8; border-right-color: #fff; border-bottom-color: #fff; }
.mem { position: relative; width: 446px; height: 25px; border: 1px solid #ababab; border-radius: 3px; background: #fff; display: flex; align-items: center; justify-content: center; overflow: hidden; }
.mem i { position: absolute; left: 0; top: 0; bottom: 0; background: linear-gradient(#d9fbd2, #b4dbb0); border-right: 1px solid #8cab86; }
.mem span { position: relative; }
.size { width: 12px; height: 12px; align-self: flex-end; margin: 0 -10px 0 12px; }

.callout { position: absolute; left: 295px; top: 205px; width: 664px; height: 100px; pointer-events: none; filter: drop-shadow(1px 2px 1px rgba(90, 60, 60, .6)); }
.callout .arrow { fill: #f23c3c; }
.callout text { font: 700 48px "Liberation Sans", sans-serif; fill: #fff; stroke: #f23c3c; stroke-width: 5px; stroke-linejoin: round; paint-order: stroke; }
```
